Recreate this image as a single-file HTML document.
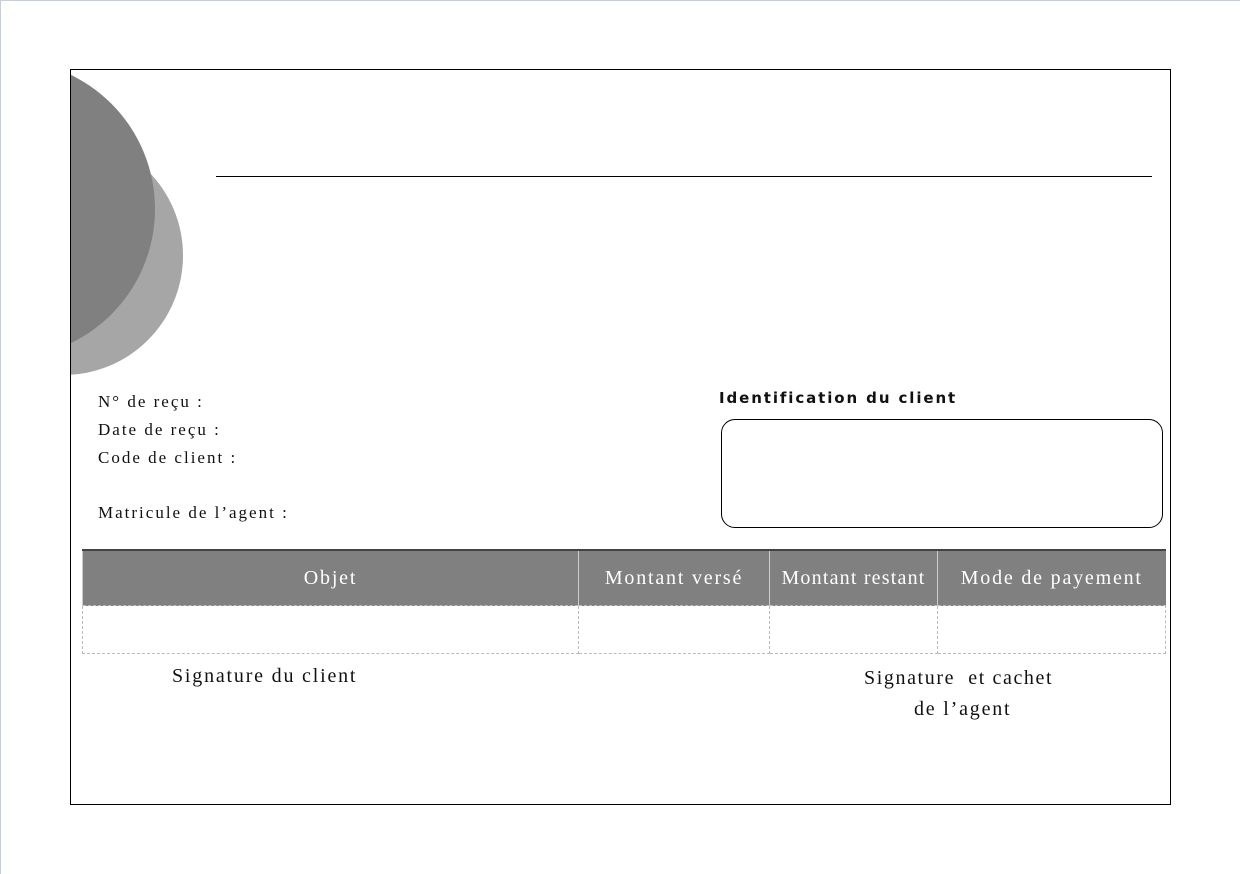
<!DOCTYPE html>
<html><head><meta charset="utf-8"><style>
body{margin:0;width:1240px;height:874px;background:#fff;position:relative;overflow:hidden;font-family:"Liberation Serif",serif;color:#111}
.frame{position:absolute;left:70px;top:69px;width:1099px;height:734px;border:1px solid #000;overflow:hidden}
.c{position:absolute;border-radius:50%}
.t{position:absolute;font-size:17px;white-space:nowrap;letter-spacing:2px}
table{position:absolute;left:82px;top:549px;width:1084px;border-collapse:collapse;table-layout:fixed}
th{background:#808080;color:#fff;font-weight:normal;font-size:20px;height:54px;border-left:1px solid #ccc;border-top:2px solid #444;padding:0;letter-spacing:1.8px;white-space:nowrap}
td{height:45px;border:1px dashed #bbb}
</style></head><body>
<div style="position:absolute;left:0;top:0;width:1240px;height:1px;background:#c5cfdc"></div>
<div style="position:absolute;left:0;top:0;width:1px;height:874px;background:#c5cfdc"></div>
<div class="frame">
 <div class="c" style="left:-127px;top:66px;width:239px;height:239px;background:#a6a6a6"></div>
 <div class="c" style="left:-214px;top:-10px;width:298px;height:298px;background:#808080"></div>
</div>
<div style="position:absolute;left:216px;top:176px;width:936px;height:1px;background:#000"></div>
<div class="t" style="left:98px;top:392px">N° de reçu :</div>
<div class="t" style="left:98px;top:420px">Date de reçu :</div>
<div class="t" style="left:98px;top:448px">Code de client :</div>
<div class="t" style="left:98px;top:503px">Matricule de l’agent :</div>
<div class="t" style="left:719px;top:389px;font-family:'DejaVu Sans',sans-serif;font-weight:bold;font-size:15px;letter-spacing:1.9px">Identification du client</div>
<div style="position:absolute;left:721px;top:419px;width:440px;height:107px;border:1.5px solid #000;border-radius:14px"></div>
<table><tr><th style="width:495px">Objet</th><th style="width:190px">Montant versé</th><th style="width:167px;letter-spacing:1.2px">Montant restant</th><th>Mode de payement</th></tr>
<tr><td></td><td></td><td></td><td></td></tr></table>
<div class="t" style="left:172px;top:665px;font-size:20px;letter-spacing:1.8px">Signature du client</div>
<div class="t" style="left:864px;top:667px;font-size:20px;letter-spacing:1.6px">Signature&nbsp; et cachet</div>
<div class="t" style="left:914px;top:698px;font-size:20px;letter-spacing:1.8px">de l’agent</div>
</body></html>
